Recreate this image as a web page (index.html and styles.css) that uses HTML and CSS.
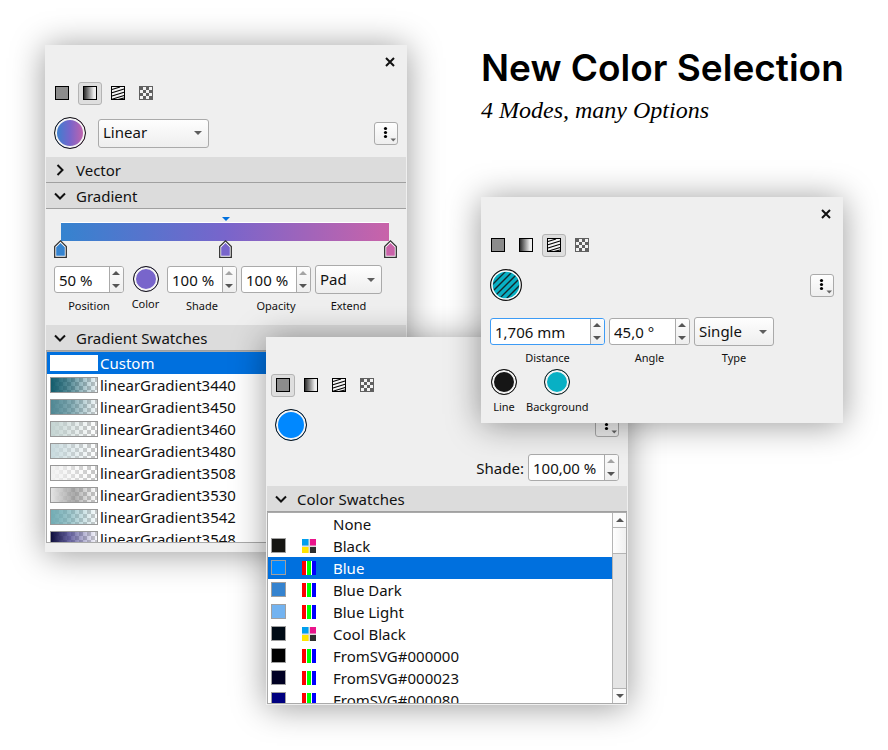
FILE: index.html
```html
<!DOCTYPE html>
<html lang="en">

<head>
    <meta charset="UTF-8">
    <meta name="viewport" content="width=device-width, initial-scale=1.0">
    <title>New Color Selection</title>
    <link rel="stylesheet" href="styles.css">
</head>

<body>
    <!-- shared icons -->
    <svg class="sprite" aria-hidden="true">
        <defs>
            <linearGradient id="bw">
                <stop offset="0" stop-color="#222" />
                <stop offset="0.8" stop-color="#eee" />
            </linearGradient>
            <clipPath id="hatchClip">
                <circle cx="16" cy="16" r="13" />
            </clipPath>
        </defs>
        <symbol id="solid" viewBox="0 0 14 14">
            <rect x="0.5" y="0.5" width="13" height="13" fill="#8c8c8c" stroke="#000" />
        </symbol>
        <symbol id="gradient" viewBox="0 0 14 14">
            <rect x="0.5" y="0.5" width="13" height="13" fill="url(#bw)" stroke="#000" />
        </symbol>
        <symbol id="hatch" viewBox="0 0 14 14">
            <rect x="0.5" y="0.5" width="13" height="13" fill="#f4f4f4" stroke="#000" />
            <path d="M1 3.6 9 1M1 6.8 13 3M1 10 13 6.2M1 13.2 13 9.4M5 14 13 12" stroke="#000" stroke-width="1.1" />
        </symbol>
        <symbol id="pattern" viewBox="0 0 14 14">
            <rect width="14" height="14" fill="#606060" />
            <path d="M4 1h3v3h-3zM10 1h3v3h-3zM1 4h3v3h-3zM7 4h3v3h-3zM4 7h3v3h-3zM10 7h3v3h-3zM1 10h3v3h-3zM7 10h3v3h-3z" fill="#f2f2f2" />
        </symbol>
        <symbol id="close" viewBox="0 0 10 10">
            <path d="M1 1 9 9M9 1 1 9" stroke="#111" stroke-width="2" />
        </symbol>
        <symbol id="dots" viewBox="0 0 22 21">
            <circle cx="10.5" cy="5.5" r="1.6" />
            <circle cx="10.5" cy="9.5" r="1.6" />
            <circle cx="10.5" cy="13.5" r="1.6" />
            <path d="M15.5 15.5h5.500l-2.750 3z" fill="#666" />
        </symbol>
        <symbol id="down" viewBox="0 0 8 4">
            <path d="M0 0h8L4 4z" />
        </symbol>
        <symbol id="up" viewBox="0 0 8 4">
            <path d="M0 4h8L4 0z" />
        </symbol>
        <symbol id="opened" viewBox="0 0 12 12">
            <path d="M1 3.500 6 8.500 11 3.500" fill="none" stroke="#111" stroke-width="2" />
        </symbol>
        <symbol id="closed" viewBox="0 0 12 12">
            <path d="M3.500 1 8.500 6 3.500 11" fill="none" stroke="#111" stroke-width="2" />
        </symbol>
        <symbol id="handle" viewBox="0 0 14 18">
            <path d="M0.700 17.300V6.500L6.500 0.900 12.300 6.500V17.300z" fill="#fff" stroke="#333" stroke-width="1.300" />
            <path d="M2.200 15.800V7.300L6.500 3 10.800 7.300V15.800z" fill="currentColor" />
        </symbol>
        <symbol id="rgb" viewBox="0 0 14 14">
            <path d="M0 0h4v14h-4z" fill="#f00" />
            <path d="M5 0h4v14h-4z" fill="#0f0" />
            <path d="M10 0h4v14h-4z" fill="#00f" />
            <path d="M4 0h1v14h-1zM9 0h1v14h-1z" fill="#fff" />
        </symbol>
        <symbol id="cmyk" viewBox="0 0 14 14">
            <rect width="14" height="14" fill="#ddd" />
            <path d="M0 0h6.500v6.500h-6.500z" fill="#009fee" />
            <path d="M8 0h6v6.500h-6z" fill="#ea148c" />
            <path d="M0 8h6.500v6h-6.500z" fill="#ffe500" />
            <path d="M8 8h6v6h-6z" fill="#2c2e2e" />
        </symbol>
    </svg>

    <main class="desktop">
        <header class="intro">
            <h1>New Color Selection</h1>
            <p>4 Modes, many Options</p>
        </header>

        <section class="panel panel-gradient" aria-label="Gradient mode">
            <div class="titlebar">
                <button class="close" aria-label="Close"><svg><use href="#close" /></svg></button>
            </div>
            <div class="modes">
                <button aria-label="Solid"><svg><use href="#solid" /></svg></button>
                <button class="active" aria-label="Gradient"><svg><use href="#gradient" /></svg></button>
                <button aria-label="Hatch"><svg><use href="#hatch" /></svg></button>
                <button aria-label="Pattern"><svg><use href="#pattern" /></svg></button>
            </div>
            <div class="toolbar">
                <button class="color large color-gradient" aria-label="Fill"></button>
                <span class="select select-gradient">
                    <select aria-label="Gradient type"><option>Linear</option></select>
                    <svg><use href="#down" /></svg>
                </span>
                <button class="menu" aria-label="Options"><svg><use href="#dots" /></svg></button>
            </div>
            <button class="section" aria-expanded="false"><svg><use href="#closed" /></svg>Vector</button>
            <button class="section" aria-expanded="true"><svg><use href="#opened" /></svg>Gradient</button>
            <div class="gradient-editor">
                <svg class="midpoint"><use href="#down" /></svg>
                <div class="gradient-bar"></div>
                <div class="handles">
                    <button class="handle handle-start" aria-label="First stop"><svg><use href="#handle" /></svg></button>
                    <button class="handle handle-middle" aria-label="Second stop"><svg><use href="#handle" /></svg></button>
                    <button class="handle handle-end" aria-label="Last stop"><svg><use href="#handle" /></svg></button>
                </div>
            </div>
            <div class="fields">
                <div class="field">
                    <div class="spin spin-short">
                        <input id="position" type="text" value="50 %">
                        <div class="arrows">
                            <button aria-label="Increase"><svg><use href="#up" /></svg></button>
                            <button aria-label="Decrease"><svg><use href="#down" /></svg></button>
                        </div>
                    </div>
                    <label for="position">Position</label>
                </div>
                <div class="field field-color">
                    <button id="stopColor" class="color color-violet"></button>
                    <label for="stopColor">Color</label>
                </div>
                <div class="field">
                    <div class="spin spin-short at-max">
                        <input id="shade" type="text" value="100 %">
                        <div class="arrows">
                            <button aria-label="Increase"><svg><use href="#up" /></svg></button>
                            <button aria-label="Decrease"><svg><use href="#down" /></svg></button>
                        </div>
                    </div>
                    <label for="shade">Shade</label>
                </div>
                <div class="field">
                    <div class="spin spin-short at-max">
                        <input id="opacity" type="text" value="100 %">
                        <div class="arrows">
                            <button aria-label="Increase"><svg><use href="#up" /></svg></button>
                            <button aria-label="Decrease"><svg><use href="#down" /></svg></button>
                        </div>
                    </div>
                    <label for="opacity">Opacity</label>
                </div>
                <div class="field">
                    <span class="select select-extend">
                        <select id="extend"><option>Pad</option></select>
                        <svg><use href="#down" /></svg>
                    </span>
                    <label for="extend">Extend</label>
                </div>
            </div>
            <button class="section" aria-expanded="true"><svg><use href="#opened" /></svg>Gradient Swatches</button>
            <div class="list">
                <ul class="gradients" role="listbox" aria-label="Gradient Swatches">
                    <li role="option" aria-selected="true"><span class="preview custom"></span>Custom</li>
                    <li role="option"><span class="preview g3440"></span>linearGradient3440</li>
                    <li role="option"><span class="preview g3450"></span>linearGradient3450</li>
                    <li role="option"><span class="preview g3460"></span>linearGradient3460</li>
                    <li role="option"><span class="preview g3480"></span>linearGradient3480</li>
                    <li role="option"><span class="preview g3508"></span>linearGradient3508</li>
                    <li role="option"><span class="preview g3530"></span>linearGradient3530</li>
                    <li role="option"><span class="preview g3542"></span>linearGradient3542</li>
                    <li role="option"><span class="preview g3548"></span>linearGradient3548</li>
                </ul>
            </div>
        </section>

        <section class="panel panel-solid" aria-label="Solid mode">
            <div class="titlebar">
                <button class="close" aria-label="Close"><svg><use href="#close" /></svg></button>
            </div>
            <div class="modes">
                <button class="active" aria-label="Solid"><svg><use href="#solid" /></svg></button>
                <button aria-label="Gradient"><svg><use href="#gradient" /></svg></button>
                <button aria-label="Hatch"><svg><use href="#hatch" /></svg></button>
                <button aria-label="Pattern"><svg><use href="#pattern" /></svg></button>
            </div>
            <div class="toolbar">
                <button class="color large color-blue" aria-label="Fill"></button>
                <button class="menu" aria-label="Options"><svg><use href="#dots" /></svg></button>
            </div>
            <div class="shade-row">
                <label for="solidShade">Shade:</label>
                <div class="spin spin-shade at-max">
                    <input id="solidShade" type="text" value="100,00 %">
                    <div class="arrows">
                        <button aria-label="Increase"><svg><use href="#up" /></svg></button>
                        <button aria-label="Decrease"><svg><use href="#down" /></svg></button>
                    </div>
                </div>
            </div>
            <button class="section" aria-expanded="true"><svg><use href="#opened" /></svg>Color Swatches</button>
            <div class="list">
                <ul class="colors" role="listbox" aria-label="Color Swatches">
                    <li role="option"><span></span><span></span>None</li>
                    <li role="option"><span class="swatch black"></span><svg><use href="#cmyk" /></svg>Black</li>
                    <li role="option" aria-selected="true"><span class="swatch blue"></span><svg><use href="#rgb" /></svg>Blue</li>
                    <li role="option"><span class="swatch blue-dark"></span><svg><use href="#rgb" /></svg>Blue Dark</li>
                    <li role="option"><span class="swatch blue-light"></span><svg><use href="#rgb" /></svg>Blue Light</li>
                    <li role="option"><span class="swatch cool-black"></span><svg><use href="#cmyk" /></svg>Cool Black</li>
                    <li role="option"><span class="swatch svg-000000"></span><svg><use href="#rgb" /></svg>FromSVG#000000</li>
                    <li role="option"><span class="swatch svg-000023"></span><svg><use href="#rgb" /></svg>FromSVG#000023</li>
                    <li role="option"><span class="swatch svg-000080"></span><svg><use href="#rgb" /></svg>FromSVG#000080</li>
                </ul>
                <div class="scrollbar">
                    <button aria-label="Scroll up"><svg><use href="#up" /></svg></button>
                    <div class="thumb"></div>
                    <button aria-label="Scroll down"><svg><use href="#down" /></svg></button>
                </div>
            </div>
        </section>

        <section class="panel panel-hatch" aria-label="Hatch mode">
            <div class="titlebar">
                <button class="close" aria-label="Close"><svg><use href="#close" /></svg></button>
            </div>
            <div class="modes">
                <button aria-label="Solid"><svg><use href="#solid" /></svg></button>
                <button aria-label="Gradient"><svg><use href="#gradient" /></svg></button>
                <button class="active" aria-label="Hatch"><svg><use href="#hatch" /></svg></button>
                <button aria-label="Pattern"><svg><use href="#pattern" /></svg></button>
            </div>
            <div class="toolbar">
                <button class="hatch-preview" aria-label="Fill">
                    <svg viewBox="0 0 32 32">
                        <circle cx="16" cy="16" r="15.400" fill="#fff" stroke="#111" stroke-width="1.200" />
                        <circle cx="16" cy="16" r="13.300" fill="#08b0c4" />
                        <path clip-path="url(#hatchClip)" d="M0 18 18 0M0 25 25 0M0 32 32 0M7 32 32 7M14 32 32 14" stroke="#15262a" stroke-width="1.300" />
                    </svg>
                </button>
                <button class="menu" aria-label="Options"><svg><use href="#dots" /></svg></button>
            </div>
            <div class="fields hatch-fields">
                <div class="field">
                    <div class="spin spin-distance focused">
                        <input id="distance" type="text" value="1,706 mm">
                        <div class="arrows">
                            <button aria-label="Increase"><svg><use href="#up" /></svg></button>
                            <button aria-label="Decrease"><svg><use href="#down" /></svg></button>
                        </div>
                    </div>
                    <label for="distance">Distance</label>
                </div>
                <div class="field">
                    <div class="spin spin-angle">
                        <input id="angle" type="text" value="45,0 °">
                        <div class="arrows">
                            <button aria-label="Increase"><svg><use href="#up" /></svg></button>
                            <button aria-label="Decrease"><svg><use href="#down" /></svg></button>
                        </div>
                    </div>
                    <label for="angle">Angle</label>
                </div>
                <div class="field">
                    <span class="select select-type">
                        <select id="type"><option>Single</option></select>
                        <svg><use href="#down" /></svg>
                    </span>
                    <label for="type">Type</label>
                </div>
            </div>
            <div class="hatch-colors">
                <div class="field">
                    <button id="lineColor" class="color color-black"></button>
                    <label for="lineColor">Line</label>
                </div>
                <div class="field">
                    <button id="backgroundColor" class="color color-teal"></button>
                    <label for="backgroundColor">Background</label>
                </div>
            </div>
        </section>
    </main>
</body>

</html>
```
FILE: styles.css
```css
* {
    box-sizing: border-box;
}

body {
    margin: 0;
    background-color: #fff;
    color: #111;
    font-family: "Noto Sans", sans-serif;
    font-size: 15px;
    line-height: 22px;
}

button,
input,
select {
    margin: 0;
    padding: 0;
    border: none;
    outline: none;
    color: inherit;
    font: inherit;
}

button {
    background: none;
}

svg {
    display: block;
    flex: none;
}

ul {
    margin: 0;
    padding: 0;
    list-style: none;
}

.sprite {
    position: absolute;
    width: 0;
    height: 0;
}

.desktop {
    position: relative;
    min-height: 750px;
    overflow: hidden;
}

/* heading */

.intro {
    position: absolute;
    left: 481px;
    top: 44px;
    color: #000;
    white-space: nowrap;
}

h1 {
    margin: 0;
    font-family: Inter, sans-serif;
    font-size: 37px;
    font-weight: 600;
    line-height: 48px;
}

.intro p {
    margin: 0;
    font-family: "Liberation Serif", serif;
    font-size: 24px;
    font-style: italic;
    line-height: 36px;
}

/* floating panels */

.panel {
    position: absolute;
    display: flex;
    flex-direction: column;
    width: 362px;
    padding: 0 1px;
    background-color: #efefef;
    box-shadow: 0 2px 32px rgba(0, 0, 0, 0.4);
}

.panel-gradient {
    left: 45px;
    top: 45px;
    padding-bottom: 9px;
}

.panel-solid {
    left: 266px;
    top: 337px;
    padding-bottom: 1px;
}

.panel-hatch {
    left: 481px;
    top: 197px;
    padding-bottom: 8px;
}

.titlebar {
    display: flex;
    justify-content: flex-end;
    height: 37px;
    padding: 12px 11px;
}

.close svg {
    width: 10px;
    height: 10px;
}

.close {
    height: 10px;
}

.modes {
    display: flex;
    gap: 4px;
    padding: 0 4px;
}

.modes button {
    display: grid;
    justify-content: center;
    align-content: start;
    width: 24px;
    height: 23px;
    padding-top: 3px;
    border: 1px solid transparent;
    border-radius: 3px;
}

.modes .active {
    border-color: #b4b4b4;
    background-color: #dedede;
}

.modes svg {
    width: 14px;
    height: 14px;
}

.toolbar {
    display: flex;
    align-items: center;
    gap: 12px;
    padding: 12px 8px 8px;
}

.menu {
    width: 24px;
    height: 23px;
    margin-left: auto;
    border: 1px solid #aaa;
    border-radius: 3px;
    background: linear-gradient(#fefefe, #eee);
}

.menu svg {
    width: 22px;
    height: 21px;
}

/* round color buttons */

.color {
    width: 26px;
    height: 26px;
    border: 1px solid #111;
    border-radius: 50%;
    box-shadow: inset 0 0 0 2px #f4f4f4;
}

.large,
.hatch-preview {
    width: 32px;
    height: 32px;
}

.color-gradient {
    background: linear-gradient(90deg, #3583cf, #7865cb 50%, #c963a9);
}

.color-violet {
    background-color: #7865cb;
}

.color-blue {
    background-color: #0088ff;
}

.color-black {
    background-color: #161616;
}

.color-teal {
    background-color: #08b0c4;
}

/* drop-downs */

.select {
    display: grid;
    align-items: center;
    height: 29px;
}

.select select,
.select svg {
    grid-area: 1 / 1;
}

.select select {
    width: 100%;
    height: 29px;
    padding: 0 4px 2px;
    border: 1px solid #aaa;
    border-radius: 3px;
    background: linear-gradient(#fefefe, #eee);
    appearance: none;
}

.select svg {
    justify-self: end;
    width: 8px;
    height: 4px;
    margin-right: 7px;
    fill: #5e5e5e;
    pointer-events: none;
}

.select-gradient {
    width: 111px;
}

.select-extend {
    width: 67px;
}

.select-type {
    width: 80px;
}

/* number boxes */

.spin {
    display: flex;
    height: 27px;
    border: 1px solid #aaa;
    border-radius: 3px;
    overflow: hidden;
    background-color: #fff;
}

.field .spin {
    margin: 1px 0;
}

.spin input {
    flex: 1;
    min-width: 0;
    padding-left: 4px;
    background: none;
}

.spin-short {
    width: 70px;
}

.spin-shade {
    width: 91px;
}

.spin-distance {
    width: 115px;
}

.spin-angle {
    width: 81px;
}

.spin.focused {
    border-color: #3d9bf5;
}

.arrows {
    display: grid;
    width: 14px;
    border-left: 1px solid #aaa;
    background: linear-gradient(#fcfcfc, #eee);
}

.arrows button {
    display: grid;
    place-items: center;
    padding-right: 1px;
}

.arrows svg {
    width: 8px;
    height: 4px;
    fill: #555;
}

.at-max button:first-child svg {
    fill: #a4a4a4;
}

.fields {
    display: flex;
    gap: 4px;
    padding: 7px 8px 11px;
}

.field {
    display: flex;
    flex-direction: column;
    align-items: center;
    gap: 4px;
}

.field label {
    font-size: 11px;
    line-height: 16px;
}

.field-color {
    width: 35px;
    padding-top: 1px;
}

.hatch-fields {
    padding: 8px 8px 3px;
}

.hatch-colors {
    display: flex;
    gap: 9px;
    padding: 0 9px;
}

.hatch-colors .field:first-child {
    width: 26px;
}

.shade-row {
    display: flex;
    align-items: center;
    justify-content: flex-end;
    gap: 4px;
    padding: 5px 8px;
}

/* collapsible sections */

.section {
    display: flex;
    align-items: center;
    gap: 10px;
    height: 26px;
    padding: 0 8px;
    border-bottom: 1px solid #a0a0a0;
    background-color: #dcdcdc;
}

.section svg {
    width: 12px;
    height: 12px;
}

/* gradient editor */

.gradient-editor {
    padding: 8px 8px 0;
}

.midpoint {
    width: 8px;
    height: 4px;
    margin: 0 auto 1px;
    fill: #0070de;
}

.gradient-bar {
    height: 19px;
    margin: 0 9px 0 7px;
    border-top: 1px solid #fff;
    background: linear-gradient(90deg, #3583cf, #7865cb 50%, #c963a9);
}

.handles {
    display: flex;
    justify-content: space-between;
    margin-top: -1px;
}

.handle svg {
    width: 14px;
    height: 18px;
}

.handle-start {
    color: #3583cf;
}

.handle-middle {
    color: #7865cb;
}

.handle-end {
    color: #c963a9;
}

/* swatch lists */

.list {
    display: flex;
    height: 192px;
    border: 1px solid #aaa;
    overflow: hidden;
    background-color: #fff;
}

.list ul {
    flex: 1;
}

.list li {
    display: grid;
    align-items: center;
    height: 22px;
    padding-left: 3px;
}

.gradients li {
    grid-template-columns: 48px 1fr;
    gap: 2px;
}

.colors li {
    grid-template-columns: 31px 31px 1fr;
}

.list li[aria-selected="true"] {
    background-color: #0070de;
    color: #fff;
}

.preview {
    height: 16px;
    border: 1px solid #999;
}

.custom {
    border-color: #fff;
    background-color: #fff;
}

.g3440 {
    background: linear-gradient(90deg, #125c6c, rgba(18, 92, 108, 0.7) 40%, rgba(160, 200, 215, 0.15)), repeating-conic-gradient(#c4c4c4 0 25%, #fff 0 50%) 0 0 / 8px 8px;
}

.g3450 {
    background: linear-gradient(90deg, #4f8793, rgba(79, 135, 147, 0.7) 45%, rgba(200, 225, 230, 0.15)), repeating-conic-gradient(#c4c4c4 0 25%, #fff 0 50%) 0 0 / 8px 8px;
}

.g3460 {
    background: linear-gradient(90deg, #c4d4d2, rgba(196, 212, 210, 0)), repeating-conic-gradient(#c4c4c4 0 25%, #fff 0 50%) 0 0 / 8px 8px;
}

.g3480 {
    background: linear-gradient(90deg, #c8dade, rgba(200, 218, 222, 0)), repeating-conic-gradient(#c4c4c4 0 25%, #fff 0 50%) 0 0 / 8px 8px;
}

.g3508 {
    background: linear-gradient(90deg, #f2f2f2, rgba(242, 242, 242, 0)), repeating-conic-gradient(#c4c4c4 0 25%, #fff 0 50%) 0 0 / 8px 8px;
}

.g3530 {
    background: linear-gradient(90deg, #e4e4e4, rgba(150, 150, 150, 0.8) 50%, rgba(220, 220, 220, 0)), repeating-conic-gradient(#c4c4c4 0 25%, #fff 0 50%) 0 0 / 8px 8px;
}

.g3542 {
    background: linear-gradient(90deg, #72acb4, rgba(114, 172, 180, 0.7) 40%, rgba(220, 240, 245, 0.15)), repeating-conic-gradient(#c4c4c4 0 25%, #fff 0 50%) 0 0 / 8px 8px;
}

.g3548 {
    background: linear-gradient(90deg, #0d0d3c, rgba(70, 65, 140, 0.8) 40%, rgba(220, 220, 250, 0.15)), repeating-conic-gradient(#c4c4c4 0 25%, #fff 0 50%) 0 0 / 8px 8px;
}

.swatch {
    align-self: start;
    width: 15px;
    height: 15px;
    margin-top: 3px;
    border: 1px solid #a0a0a0;
}

.colors svg {
    width: 14px;
    height: 14px;
}

.black {
    background-color: #161613;
}

.blue {
    background-color: #0088ff;
}

.blue-dark {
    background-color: #3583cf;
}

.blue-light {
    background-color: #73b3f0;
}

.cool-black {
    background-color: #000b16;
}

.svg-000000 {
    background-color: #000;
}

.svg-000023 {
    background-color: #000023;
}

.svg-000080 {
    background-color: #000080;
}

.scrollbar {
    display: flex;
    flex-direction: column;
    width: 14px;
    border-left: 1px solid #b4b4b4;
    background-color: #e4e4e4;
}

.scrollbar button {
    display: grid;
    place-items: center;
    height: 15px;
    background-color: #fafafa;
}

.scrollbar button:first-child {
    border-bottom: 1px solid #b4b4b4;
}

.scrollbar button:last-child {
    margin-top: auto;
    border-top: 1px solid #b4b4b4;
}

.scrollbar svg {
    width: 8px;
    height: 4px;
    fill: #555;
}

.thumb {
    height: 26px;
    border-bottom: 1px solid #b4b4b4;
    background: linear-gradient(90deg, #fefefe, #f0f0f0);
}
```
